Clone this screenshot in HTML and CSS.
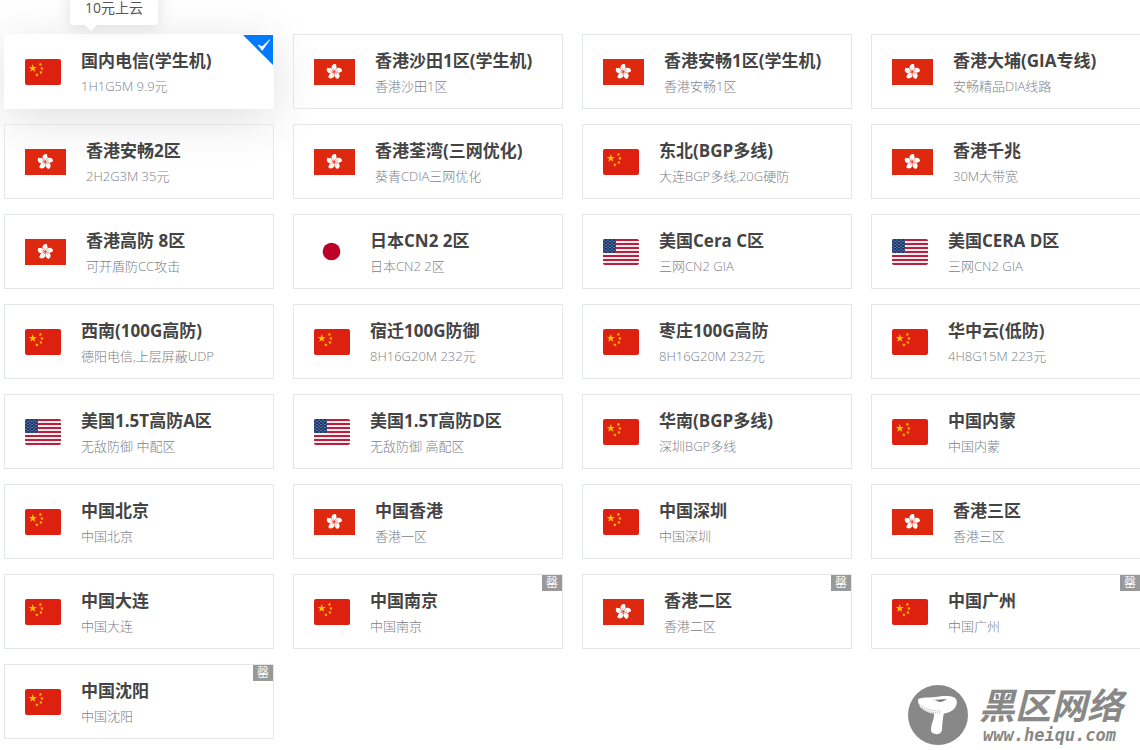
FILE: index.html
```html
<!DOCTYPE html>
<html lang="zh-CN">
<head>
  <meta charset="UTF-8">
  <meta name="viewport" content="width=device-width, initial-scale=1">
  <title>选择区域</title>
  <link rel="stylesheet" href="styles.css">
</head>
<body>
  <!-- 图标 -->
  <svg class="sprite" aria-hidden="true">
    <symbol id="star" viewBox="-10 -10 20 20">
      <path d="M0-10 2.4-3.2 9.5-3.1 3.8 1.2 5.9 8.1 0 4-5.9 8.1-3.8 1.2-9.5-3.1-2.4-3.2z"/>
    </symbol>
    <symbol id="cn" viewBox="0 0 36 26">
      <rect width="36" height="26" rx="2" fill="#de2010"/>
      <g fill="#ffc400">
        <use href="#star" x="3.5" y="5" width="8.5" height="8.5"/>
        <use href="#star" x="13.500" y="3.5" width="3.800" height="3.800"/>
        <use href="#star" x="15" y="7.5" width="3.800" height="3.800"/>
        <use href="#star" x="14" y="11.500" width="3.800" height="3.800"/>
        <use href="#star" x="10" y="14" width="3.800" height="3.800"/>
      </g>
    </symbol>
    <symbol id="hk" viewBox="0 0 41 26">
      <rect width="41" height="26" fill="#de2910"/>
      <g transform="translate(20.2 12.8)" fill="#fff">
        <path id="petal" d="M0-.6C-2.4-1.800-3.400-4-2.300-6-1.200-7.900.8-8.400 2.200-7.400 1.200-6.700 2.600-6 2.400-4.400 2.200-2.6.3-2.6 0-.6z"/>
        <use href="#petal" transform="rotate(72)"/>
        <use href="#petal" transform="rotate(144)"/>
        <use href="#petal" transform="rotate(216)"/>
        <use href="#petal" transform="rotate(288)"/>
        <g fill="none" stroke="#de2910" stroke-width=".3">
          <path id="vein" d="M0-.8Q-1.2-2.500-.4-4"/>
          <use href="#vein" transform="rotate(72)"/>
          <use href="#vein" transform="rotate(144)"/>
          <use href="#vein" transform="rotate(216)"/>
          <use href="#vein" transform="rotate(288)"/>
        </g>
      </g>
    </symbol>
    <symbol id="jp" viewBox="0 0 36 26">
      <rect width="36" height="26" rx="2" fill="#fff"/>
      <circle cx="17.5" cy="12.5" r="8.8" fill="#bc0029"/>
    </symbol>
    <pattern id="dots" width="4" height="3" patternUnits="userSpaceOnUse">
      <circle cx="1" cy="1" r=".55" fill="#b9c4dc"/>
      <circle cx="3" cy="2.5" r=".55" fill="#b9c4dc"/>
    </pattern>
    <clipPath id="round"><rect width="36" height="26" rx="2"/></clipPath>
    <symbol id="us" viewBox="0 0 36 26">
      <g clip-path="url(#round)">
        <rect width="36" height="26" fill="#f4eef0"/>
        <path d="M0 1h36M0 5h36M0 9h36M0 13h36M0 17h36M0 21h36M0 25h36" stroke="#be1e3e" stroke-width="2"/>
        <rect width="13" height="14" fill="#1c3a70"/>
        <rect width="13" height="14" fill="url(#dots)"/>
      </g>
    </symbol>
  </svg>

  <main class="regions">
    <label class="card">
      <input type="radio" name="region" checked>
      <svg class="flag"><use href="#cn"/></svg>
      <span class="info"><b>国内电信(学生机)</b><small>1H1G5M 9.9元</small></span>
      <svg class="check" viewBox="0 0 30 30"><path d="M0 0h30v30z" fill="#007bff"/><path d="M15 10l4.200 5.500L27 4.500l-7.600 7z" fill="#fff" stroke="#fff" stroke-width=".6"/></svg>
      <span class="tip">10元上云</span>
    </label>
    <label class="card">
      <input type="radio" name="region">
      <svg class="flag hk"><use href="#hk"/></svg>
      <span class="info"><b>香港沙田1区(学生机)</b><small>香港沙田1区</small></span>
    </label>
    <label class="card">
      <input type="radio" name="region">
      <svg class="flag hk"><use href="#hk"/></svg>
      <span class="info"><b>香港安畅1区(学生机)</b><small>香港安畅1区</small></span>
    </label>
    <label class="card">
      <input type="radio" name="region">
      <svg class="flag hk"><use href="#hk"/></svg>
      <span class="info"><b>香港大埔(GIA专线)</b><small>安畅精品DIA线路</small></span>
    </label>

    <label class="card">
      <input type="radio" name="region">
      <svg class="flag hk"><use href="#hk"/></svg>
      <span class="info"><b>香港安畅2区</b><small>2H2G3M 35元</small></span>
    </label>
    <label class="card">
      <input type="radio" name="region">
      <svg class="flag hk"><use href="#hk"/></svg>
      <span class="info"><b>香港荃湾(三网优化)</b><small>葵青CDIA三网优化</small></span>
    </label>
    <label class="card">
      <input type="radio" name="region">
      <svg class="flag"><use href="#cn"/></svg>
      <span class="info"><b>东北(BGP多线)</b><small>大连BGP多线,20G硬防</small></span>
    </label>
    <label class="card">
      <input type="radio" name="region">
      <svg class="flag hk"><use href="#hk"/></svg>
      <span class="info"><b>香港千兆</b><small>30M大带宽</small></span>
    </label>

    <label class="card">
      <input type="radio" name="region">
      <svg class="flag hk"><use href="#hk"/></svg>
      <span class="info"><b>香港高防 8区</b><small>可开盾防CC攻击</small></span>
    </label>
    <label class="card">
      <input type="radio" name="region">
      <svg class="flag"><use href="#jp"/></svg>
      <span class="info"><b>日本CN2 2区</b><small>日本CN2 2区</small></span>
    </label>
    <label class="card">
      <input type="radio" name="region">
      <svg class="flag"><use href="#us"/></svg>
      <span class="info"><b>美国Cera C区</b><small>三网CN2 GIA</small></span>
    </label>
    <label class="card">
      <input type="radio" name="region">
      <svg class="flag"><use href="#us"/></svg>
      <span class="info"><b>美国CERA D区</b><small>三网CN2 GIA</small></span>
    </label>

    <label class="card">
      <input type="radio" name="region">
      <svg class="flag"><use href="#cn"/></svg>
      <span class="info"><b>西南(100G高防)</b><small>德阳电信,上层屏蔽UDP</small></span>
    </label>
    <label class="card">
      <input type="radio" name="region">
      <svg class="flag"><use href="#cn"/></svg>
      <span class="info"><b>宿迁100G防御</b><small>8H16G20M 232元</small></span>
    </label>
    <label class="card">
      <input type="radio" name="region">
      <svg class="flag"><use href="#cn"/></svg>
      <span class="info"><b>枣庄100G高防</b><small>8H16G20M 232元</small></span>
    </label>
    <label class="card">
      <input type="radio" name="region">
      <svg class="flag"><use href="#cn"/></svg>
      <span class="info"><b>华中云(低防)</b><small>4H8G15M 223元</small></span>
    </label>

    <label class="card">
      <input type="radio" name="region">
      <svg class="flag"><use href="#us"/></svg>
      <span class="info"><b>美国1.5T高防A区</b><small>无敌防御 中配区</small></span>
    </label>
    <label class="card">
      <input type="radio" name="region">
      <svg class="flag"><use href="#us"/></svg>
      <span class="info"><b>美国1.5T高防D区</b><small>无敌防御 高配区</small></span>
    </label>
    <label class="card">
      <input type="radio" name="region">
      <svg class="flag"><use href="#cn"/></svg>
      <span class="info"><b>华南(BGP多线)</b><small>深圳BGP多线</small></span>
    </label>
    <label class="card">
      <input type="radio" name="region">
      <svg class="flag"><use href="#cn"/></svg>
      <span class="info"><b>中国内蒙</b><small>中国内蒙</small></span>
    </label>

    <label class="card">
      <input type="radio" name="region">
      <svg class="flag"><use href="#cn"/></svg>
      <span class="info"><b>中国北京</b><small>中国北京</small></span>
    </label>
    <label class="card">
      <input type="radio" name="region">
      <svg class="flag hk"><use href="#hk"/></svg>
      <span class="info"><b>中国香港</b><small>香港一区</small></span>
    </label>
    <label class="card">
      <input type="radio" name="region">
      <svg class="flag"><use href="#cn"/></svg>
      <span class="info"><b>中国深圳</b><small>中国深圳</small></span>
    </label>
    <label class="card">
      <input type="radio" name="region">
      <svg class="flag hk"><use href="#hk"/></svg>
      <span class="info"><b>香港三区</b><small>香港三区</small></span>
    </label>

    <label class="card">
      <input type="radio" name="region">
      <svg class="flag"><use href="#cn"/></svg>
      <span class="info"><b>中国大连</b><small>中国大连</small></span>
    </label>
    <label class="card">
      <input type="radio" name="region">
      <svg class="flag"><use href="#cn"/></svg>
      <span class="info"><b>中国南京</b><small>中国南京</small></span>
      <span class="soldout">罄</span>
    </label>
    <label class="card">
      <input type="radio" name="region">
      <svg class="flag hk"><use href="#hk"/></svg>
      <span class="info"><b>香港二区</b><small>香港二区</small></span>
      <span class="soldout">罄</span>
    </label>
    <label class="card">
      <input type="radio" name="region">
      <svg class="flag"><use href="#cn"/></svg>
      <span class="info"><b>中国广州</b><small>中国广州</small></span>
      <span class="soldout">罄</span>
    </label>

    <label class="card">
      <input type="radio" name="region">
      <svg class="flag"><use href="#cn"/></svg>
      <span class="info"><b>中国沈阳</b><small>中国沈阳</small></span>
      <span class="soldout">罄</span>
    </label>
  </main>

  <!-- 水印 -->
  <div class="watermark">
    <svg class="mushroom" viewBox="0 0 60 60">
      <circle cx="30" cy="30" r="30" fill="#888"/>
      <path d="M26 26C27 34 23 38 23 45c0 5 10 6 11 0 0-6 1-12 2-18z" fill="#fff"/>
      <path d="M10 15c0-3 9-2 17-3 7-1 16-2 20 1 3 2 2 8-1 11-4 4-10 5-16 5-8 0-20-4-20-14z" fill="#fff"/>
      <path d="M11 19c6 5 12 7 22 7M14 23c6 4 11 5 18 5" fill="none" stroke="#aaa" stroke-dasharray="1 1"/>
      <path d="M25 15c5 0 9-1 14-1-3 2-5 3-8 3-1-1-3-2-6-2z" fill="#777"/>
    </svg>
    <div class="site">
      <strong>黑区网络</strong>
      <span>www.heiqu.com</span>
    </div>
  </div>
</body>
</html>
```
FILE: styles.css
```css
* {
  box-sizing: border-box;
}
body {
  position: relative;
  min-height: 100vh;
  margin: 0;
  overflow: hidden;
  background: #fff;
  font-family: "Open Sans", "Noto Sans CJK SC", sans-serif;
}
.sprite {
  position: absolute;
  width: 0;
  height: 0;
}

.regions {
  display: grid;
  grid-template-columns: repeat(4, 1fr);
  gap: 15px 19px;
  margin-right: -1px;
  padding: 34px 0 0 4px;
}
.card {
  position: relative;
  display: flex;
  align-items: center;
  gap: 20px;
  min-height: 75px;
  padding: 1px 20px 0;
  border: 1px solid #e4e7ea;
  white-space: nowrap;
  cursor: pointer;
}
.card input {
  position: absolute;
  margin: 0;
  opacity: 0;
}
.card:has(input:checked) {
  border-color: #fff;
  background: #fff;
  box-shadow: 0 10px 50px rgba(0, 10, 10, 0.13);
}
.flag {
  flex: none;
  width: 36px;
  height: 26px;
}
.flag.hk {
  width: 41px;
}
.info {
  display: flex;
  flex-direction: column;
  padding-top: 3px;
}
.info b {
  color: #444;
  font-size: 17px;
  line-height: 25px;
}
.info small {
  color: #7c8088;
  font-size: 13px;
  font-weight: 300;
  line-height: 26px;
}
.check {
  position: absolute;
  top: 0;
  right: 0;
  width: 30px;
  height: 30px;
}
.soldout {
  position: absolute;
  top: 0;
  right: 0;
  width: 20px;
  background: #999;
  color: #fff;
  font-size: 12px;
  line-height: 16px;
  text-align: center;
}

/* 提示气泡 */
.tip {
  position: absolute;
  bottom: 100%;
  left: 65px;
  margin-bottom: 10px;
  padding: 6px 15px;
  border-radius: 3px;
  background: #fff;
  box-shadow: 0 2px 16px rgba(0, 0, 0, 0.12);
  color: #555;
  font-size: 14px;
  line-height: 22px;
}
.tip::after {
  content: "";
  position: absolute;
  top: 100%;
  left: 15px;
  border: 6px solid transparent;
  border-top-color: #fff;
  border-bottom: 0;
}

.watermark {
  position: absolute;
  right: 17px;
  bottom: 5px;
  display: flex;
  align-items: center;
  gap: 11px;
  color: #888;
  font-style: italic;
}
.mushroom {
  width: 60px;
  height: 60px;
}
.site {
  display: flex;
  flex-direction: column;
}
.site strong {
  font-size: 36px;
  line-height: 40px;
}
.site span {
  padding-left: 4px;
  font-family: "DejaVu Sans Mono", monospace;
  font-size: 17px;
  font-weight: bold;
  line-height: 18px;
}
```
